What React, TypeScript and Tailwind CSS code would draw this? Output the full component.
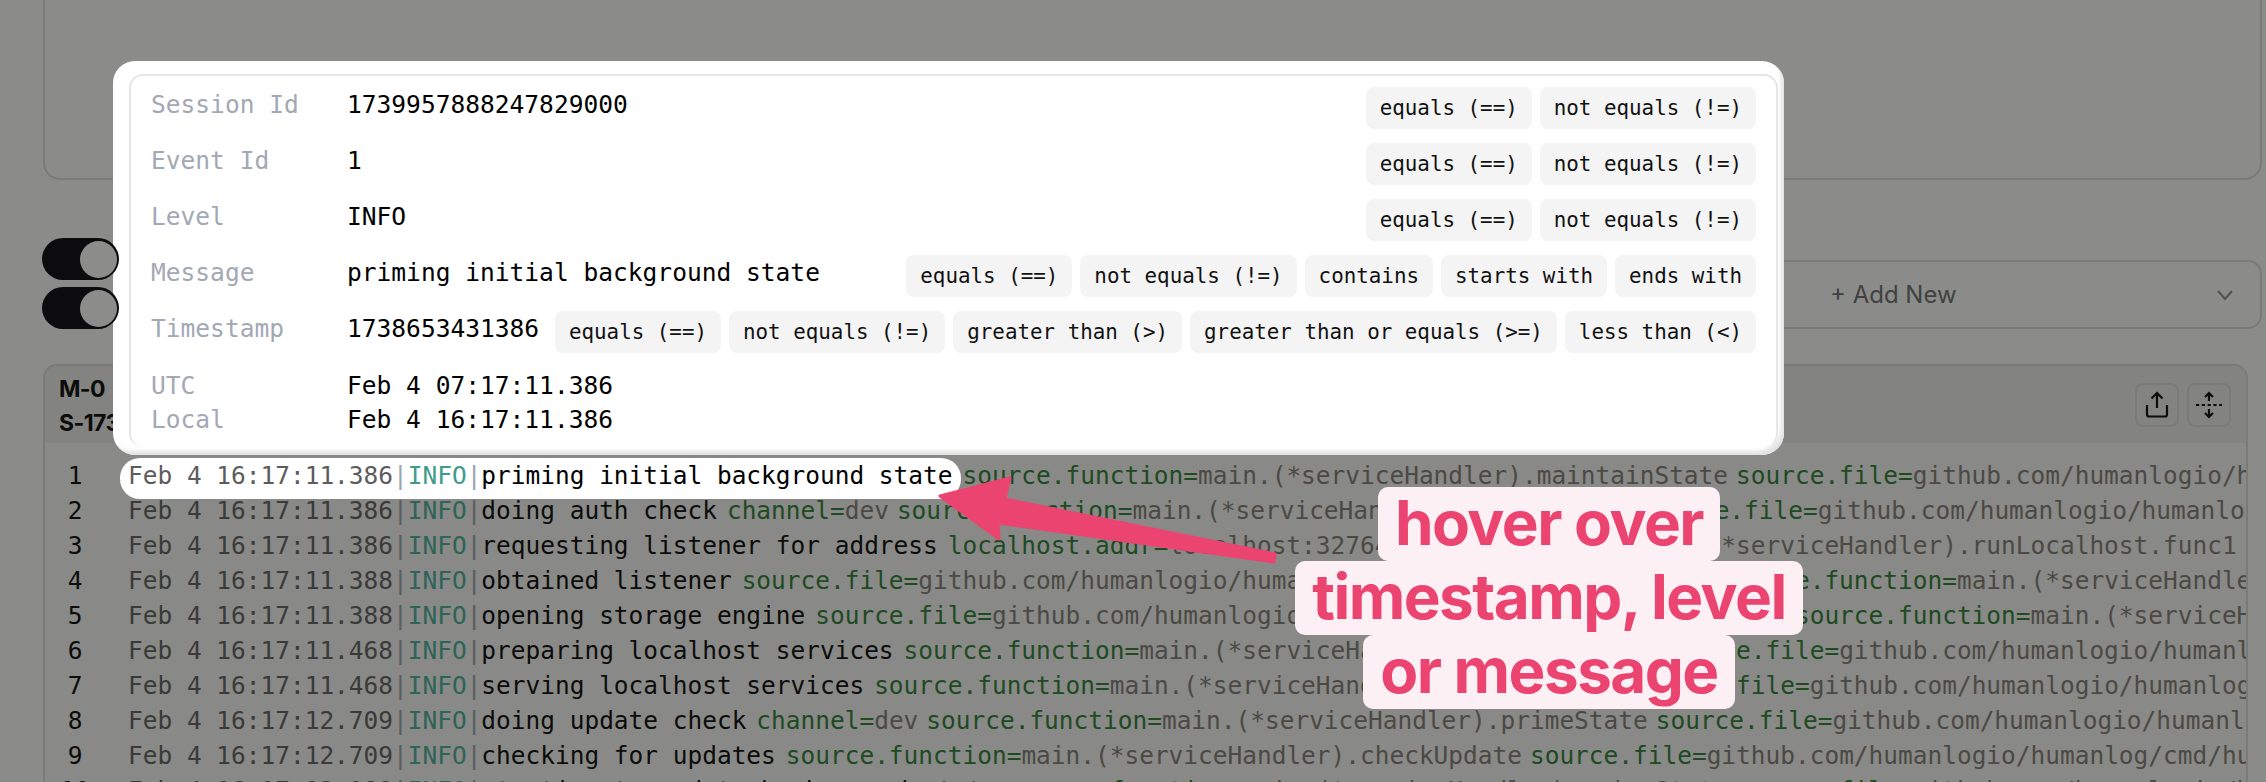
const MONO = "font-['DejaVu_Sans_Mono',monospace]";

type Kv = [string, string];

const FILE = "github.com/humanlogio/humanlog/cmd/humanlog/main.go:123";
const FILE_SHORT = "github.com/humanlogio/humanlog/cmd/humanlog/main.go:93";
const handler = (fn: string) => `main.(*serviceHandler).${fn}`;

const logRows: { ts: string; msg: string; kvs: Kv[] }[] = [
  { ts: "Feb 4 16:17:11.386", msg: "priming initial background state", kvs: [["source.function", handler("maintainState")], ["source.file", FILE]] },
  { ts: "Feb 4 16:17:11.386", msg: "doing auth check", kvs: [["channel", "dev"], ["source.function", handler("doAuthCheck")], ["source.file", FILE]] },
  { ts: "Feb 4 16:17:11.386", msg: "requesting listener for address", kvs: [["localhost.addr", "localhost:32764"], ["source.function", handler("runLocalhost.func1")]] },
  { ts: "Feb 4 16:17:11.388", msg: "obtained listener", kvs: [["source.file", FILE_SHORT], ["source.function", handler("runLocalhost.func1")]] },
  { ts: "Feb 4 16:17:11.388", msg: "opening storage engine", kvs: [["source.file", FILE_SHORT], ["source.function", handler("runLocalhost.func1")]] },
  { ts: "Feb 4 16:17:11.468", msg: "preparing localhost services", kvs: [["source.function", handler("initServices")], ["source.file", FILE]] },
  { ts: "Feb 4 16:17:11.468", msg: "serving localhost services", kvs: [["source.function", handler("initServices")], ["source.file", FILE]] },
  { ts: "Feb 4 16:17:12.709", msg: "doing update check", kvs: [["channel", "dev"], ["source.function", handler("primeState")], ["source.file", FILE]] },
  { ts: "Feb 4 16:17:12.709", msg: "checking for updates", kvs: [["source.function", handler("checkUpdate")], ["source.file", FILE]] },
  { ts: "Feb 4 16:17:13.188", msg: "starting to update background state", kvs: [["source.function", handler("primeState")], ["source.file", FILE]] },
];

const BASIC_OPS = ["equals (==)", "not equals (!=)"];

const fields: { label: string; value: string; ops: string[] }[] = [
  { label: "Session Id", value: "1739957888247829000", ops: BASIC_OPS },
  { label: "Event Id", value: "1", ops: BASIC_OPS },
  { label: "Level", value: "INFO", ops: BASIC_OPS },
  { label: "Message", value: "priming initial background state", ops: [...BASIC_OPS, "contains", "starts with", "ends with"] },
  { label: "Timestamp", value: "1738653431386", ops: [...BASIC_OPS, "greater than (>)", "greater than or equals (>=)", "less than (<)"] },
];

function RowHead({ ts, msg, lit }: { ts: string; msg: string; lit?: boolean }) {
  return (
    <span className="shrink-0 mr-[2px]">
      <span className="text-[#5c5c5c]">{ts}</span>
      <span className="text-[#9aa3ad]">|</span>
      <span className={lit ? "text-[#3f9b8c]" : "text-[#44b09b]"}>INFO</span>
      <span className="text-[#9aa3ad]">|</span>
      <span className="text-black">{msg}</span>
    </span>
  );
}

function Toggle() {
  return (
    <div className="relative z-30 w-[77px] h-[42px] rounded-full bg-[#0c0c0e] flex items-center justify-end pr-[2px]">
      <div className="w-[37px] h-[37px] rounded-full bg-[#8c8c8b]" />
    </div>
  );
}

function Popover() {
  return (
    <div className="absolute z-20 left-[113px] top-[61px] w-[1671px] h-[394px] rounded-[22px] bg-white pt-[13px] pl-[16px] pr-[6px] pb-[8px] shadow-[inset_-5px_-6px_4px_-2px_#e2e2e2]">
      <div className={`h-full rounded-[14px] border-2 border-b-0 border-[#e6e6e6] bg-white pt-[11px] pl-[20px] pr-[20px] text-[24.55px] ${MONO}`}>
        <div className="flex flex-col gap-[14px]">
          {fields.map((f) => (
            <div key={f.label} className="flex items-start h-[42px]">
              <span className="w-[196px] shrink-0 leading-[36px] text-[#a2a8b4]">{f.label}</span>
              <span className="leading-[36px] text-black whitespace-nowrap">{f.value}</span>
              <div className="ml-auto flex gap-2">
                {f.ops.map((op) => (
                  <span key={op} className="h-[42px] px-[14px] rounded-lg bg-[#f4f4f4] text-[20.85px] leading-[42px] text-[#111] whitespace-nowrap">
                    {op}
                  </span>
                ))}
              </div>
            </div>
          ))}
        </div>
        <div className="mt-[16px] flex flex-col leading-[34px]">
          <div className="flex">
            <span className="w-[196px] text-[#a2a8b4]">UTC</span>
            <span className="text-black">Feb 4 07:17:11.386</span>
          </div>
          <div className="flex">
            <span className="w-[196px] text-[#a2a8b4]">Local</span>
            <span className="text-black">Feb 4 16:17:11.386</span>
          </div>
        </div>
      </div>
    </div>
  );
}

function Callout() {
  const lines = ["hover over", "timestamp, level", "or message"];
  return (
    <div className="absolute z-20 left-[1249px] top-[487px] w-[600px] flex flex-col items-center font-['Inter',sans-serif] font-bold text-[62px] tracking-[-0.025em] text-[#ec4470]">
      {lines.map((l) => (
        <span key={l} className="h-[74px] leading-[72px] px-[17px] rounded-[10px] bg-[#fcf0f4] whitespace-nowrap">
          {l}
        </span>
      ))}
    </div>
  );
}

export default function App() {
  return (
    <div className="relative w-[2266px] h-[782px] overflow-hidden bg-white pl-[43px] pr-[4px]">
      {/* Query box, scrolled mostly out of view */}
      <div className="h-[180px] rounded-b-[17px] border-2 border-t-0 border-[#dcdcda]" />

      {/* Toggles + filter bar */}
      <div className="mt-[58px] flex items-end gap-[14px]">
        <div className="flex flex-col gap-[7px] -ml-px">
          <Toggle />
          <Toggle />
        </div>
        <div className="flex-1 h-[69px] rounded-[14px] border-2 border-[#dcdcda] flex items-center justify-end">
          <div className="w-[430px] flex items-center justify-between pr-[26px] font-['Inter',sans-serif] text-[24px] text-[#6b6b70]">
            + Add New
            <svg width="18" height="12" viewBox="0 0 18 12" fill="none" stroke="#8a8a8e" strokeWidth="2">
              <path d="M2 2l7 8 7-8" />
            </svg>
          </div>
        </div>
      </div>

      {/* Log panel */}
      <div className="mt-[35px] mr-[14px] h-[430px] rounded-t-[14px] border-2 border-b-0 border-[#dcdcda] overflow-hidden bg-[#fafafa]">
        <div className="h-[77px] bg-[#eeeeee] flex items-center justify-between pl-[14px] pr-[15px]">
          <div className="pt-[2px] font-['Inter',sans-serif] font-bold text-[23px] tracking-tight leading-[34px] text-black">
            <div>M-0</div>
            <div>S-1739957888247829000</div>
          </div>
          <div className="flex gap-2">
            <button className="w-[44px] h-[44px] rounded-lg border-2 border-[#dcdcda] flex items-center justify-center">
              <svg width="28" height="28" viewBox="0 0 28 28" fill="none" stroke="#000" strokeWidth="2.2">
                <path d="M4 14v9.5a2 2 0 0 0 2 2h16a2 2 0 0 0 2-2V14" />
                <path d="M14 17V2M8.5 7.5 14 2l5.5 5.5" />
              </svg>
            </button>
            <button className="w-[44px] h-[44px] rounded-lg border-2 border-[#dcdcda] flex items-center justify-center">
              <svg width="28" height="28" viewBox="0 0 28 28" fill="none" stroke="#000" strokeWidth="2.2">
                <path d="M1 14h26" strokeDasharray="3.2 2.6" />
                <path d="M14 10V3M10 6l4-4 4 4" />
                <path d="M14 18v7M10 22l4 4 4-4" />
              </svg>
            </button>
          </div>
        </div>
        <div className={`pt-[15px] text-[24.46px] leading-[35px] ${MONO}`}>
          {logRows.map((r, i) => (
            <div key={i} className="flex h-[35px] whitespace-nowrap">
              <span className="w-[60px] shrink-0 text-center text-black">{i + 1}</span>
              <div className="flex gap-2 pl-[23px]">
                <RowHead ts={r.ts} msg={r.msg} />
                {r.kvs.map(([k, v]) => (
                  <span key={k} className="shrink-0">
                    <span className="text-[#267c30]">{k}=</span>
                    <span className="text-[#807a74]">{v}</span>
                  </span>
                ))}
              </div>
            </div>
          ))}
        </div>
      </div>

      {/* Dim scrim for the walkthrough */}
      <div className="absolute inset-0 z-10 bg-[#181814]/50" />

      <Popover />

      {/* Hovered row, lifted above the scrim */}
      <div className={`absolute z-20 left-[120px] top-[458px] w-[841px] h-[41px] rounded-[20px] bg-white pl-[8px] text-[24.46px] leading-[35px] whitespace-nowrap ${MONO}`}>
        <RowHead ts={logRows[0].ts} msg={logRows[0].msg} lit />
      </div>

      <svg className="absolute z-20 left-[930px] top-[470px]" width="360" height="100" viewBox="0 0 360 100" fill="#ec4470" stroke="#ec4470" strokeWidth="3" strokeLinejoin="round">
        <path d="M10 26 80 8 75 29 345 84 344 92 68 53 69 69Z" />
      </svg>

      <Callout />
    </div>
  );
}
